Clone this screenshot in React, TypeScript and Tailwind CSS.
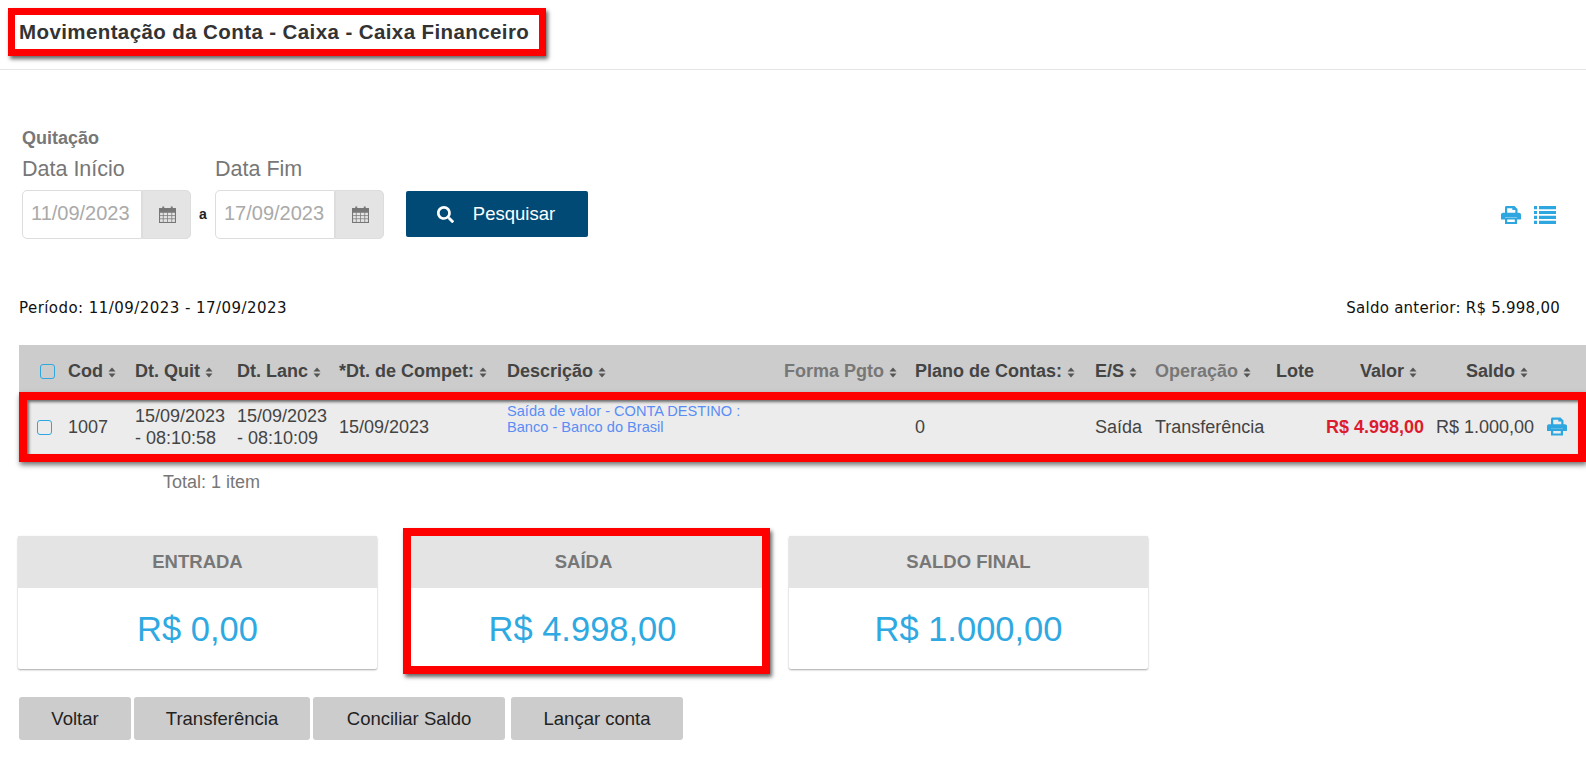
import React from 'react';
import { FaSearch } from 'react-icons/fa';

const COLS = 'grid grid-cols-[49px_67px_102px_102px_168px_277px_131px_180px_60px_121px_50px_110px_111px_39px]';

const SortIcon = () => (
  <svg viewBox="0 0 8 12" className="ml-[5px] inline-block h-[13px] w-[8px] fill-[#555]">
    <path d="M4 1 7.5 5H.5zM4 11 .5 7h7z" />
  </svg>
);

const CalendarIcon = () => (
  <svg viewBox="0 0 16 16" className="h-[17px] w-[17px] fill-none stroke-[#777]">
    <rect x="0.5" y="2.5" width="15" height="13" fill="#e4e4e4" />
    <rect x="0.5" y="2.5" width="15" height="3" fill="#777" />
    <path d="M.5 6h15M.5 9h15M.5 12h15M4 6v9.5M8 6v9.5M12 6v9.5" strokeWidth="0.7" />
    <path d="M4 .5v3M12 .5v3" strokeWidth="1.8" />
  </svg>
);

const PrintIcon = ({ className }: { className: string }) => (
  <svg viewBox="0 0 20 18" className={`fill-current ${className}`}>
    <path d="M4 8V1.5C4 .7 4.7 0 5.5 0h8l3 3v5h-2.2V4h-3V2.2H6.2V8z" />
    <path d="M2 6.8h16c1.1 0 2 .9 2 2V13c0 .3-.2.5-.5.5H16v-2.2H4v2.2H.5A.5.5 0 0 1 0 13V8.8c0-1.1.9-2 2-2z" />
    <path d="M4 11.5h12V18H4zm2.2 2v2.5h7.6v-2.5z" />
  </svg>
);

const ListIcon = ({ className }: { className: string }) => (
  <svg viewBox="0 0 22 18" className={`fill-current ${className}`}>
    <path d="M0 0h3v3.2H0zM5 0h17v3.2H5zM0 4.9h3v3.2H0zM5 4.9h17v3.2H5zM0 9.8h3V13H0zM5 9.8h17V13H5zM0 14.7h3V18H0zM5 14.7h17V18H5z" />
  </svg>
);

const Checkbox = () => (
  <span className="block h-[15px] w-[15px] rounded-[3px] border border-[#2ea7e0]" />
);

const Head = ({ label, muted, sort = true, className = '' }: { label: string; muted?: boolean; sort?: boolean; className?: string }) => (
  <div className={`whitespace-nowrap text-[18px] font-bold ${muted ? 'text-[#777]' : 'text-[#444]'} ${className}`}>
    {label}
    {sort && <SortIcon />}
  </div>
);

const DateField = ({ label, value }: { label: string; value: string }) => (
  <div className="w-[169px]">
    <div className="mb-[9px] text-[21.5px] leading-[24px] text-[#777]">{label}</div>
    <div className="flex h-[49px]">
      <div className="flex w-[120px] items-center rounded-l-[5px] border border-[#ddd] pb-[3px] pl-[8px] text-[20px] text-[#aaa]">
        {value}
      </div>
      <div className="flex w-[49px] items-center justify-center rounded-r-[5px] border border-[#ddd] bg-[#e4e4e4] pl-[2px]">
        <CalendarIcon />
      </div>
    </div>
  </div>
);

const SummaryCard = ({ title, value }: { title: string; value: string }) => (
  <div className="h-[133px] w-[359px] rounded-[2px] bg-white shadow-[0_1px_2px_rgba(0,0,0,0.35)]">
    <div className="flex h-[52px] items-center justify-center bg-[#e4e4e4] text-[18.5px] font-bold text-[#777]">{title}</div>
    <div className="flex h-[81px] items-center justify-center pt-[2px] text-[34.5px] text-[#2fa9e1]">{value}</div>
  </div>
);

const ActionButton = ({ label, className }: { label: string; className: string }) => (
  <button className={`h-[43px] rounded-[3px] bg-[#ccc] text-[18.5px] text-[#222] ${className}`}>{label}</button>
);

export default function App() {
  return (
    <div className="h-[763px] overflow-hidden bg-white font-['Liberation_Sans',sans-serif]">
      {/* Title */}
      <div className="h-[70px] border-b border-[#e5e5e5] pl-[8px] pt-[8px]">
        <div className="flex h-[48px] w-[538px] items-center border-[7px] border-[#f00] pl-[4px] shadow-[2px_3px_4px_rgba(0,0,0,0.6)]">
          <h1 className="whitespace-nowrap text-[20.5px] font-bold tracking-[0.4px] text-[#333]">
            Movimentação da Conta - Caixa - Caixa Financeiro
          </h1>
        </div>
      </div>

      {/* Filter */}
      <div className="pl-[22px] pr-[30px] pt-[57px]">
        <div className="text-[18px] font-bold leading-[22px] text-[#777]">Quitação</div>
        <div className="mt-[8px] flex items-end">
          <DateField label="Data Início" value="11/09/2023" />
          <div className="flex h-[49px] w-[24px] items-center justify-center text-[14px] font-bold text-[#222]">a</div>
          <DateField label="Data Fim" value="17/09/2023" />
          <button className="mb-[2px] ml-[22px] flex h-[46px] w-[182px] items-center justify-center rounded-[2px] bg-[#004a75] text-[18.5px] text-white">
            <FaSearch className="mr-[17px] h-[17px] w-[17px] -translate-x-[2px]" />
            Pesquisar
          </button>
          <div className="mb-[15px] ml-auto flex items-center gap-[13px] text-[#2ea7e0]">
            <PrintIcon className="h-[18px] w-[20px]" />
            <ListIcon className="h-[18px] w-[22px]" />
          </div>
        </div>
      </div>

      {/* Period */}
      <div className="mt-[59px] flex justify-between pl-[19px] pr-[26px] font-['DejaVu_Sans',sans-serif] text-[15px] leading-[20px] text-[#111]">
        <span className="tracking-[0.45px]">Período: 11/09/2023 - 17/09/2023</span>
        <span className="tracking-[0.25px]">Saldo anterior: R$ 5.998,00</span>
      </div>

      {/* Table */}
      <div className="ml-[19px] mt-[27px]">
        <div className={`${COLS} h-[47px] items-center bg-[#ccc] pt-[6px]`}>
          <div className="pl-[21px]"><Checkbox /></div>
          <Head label="Cod" />
          <Head label="Dt. Quit" />
          <Head label="Dt. Lanc" />
          <Head label="*Dt. de Compet:" />
          <Head label="Descrição" />
          <Head label="Forma Pgto" muted />
          <Head label="Plano de Contas:" />
          <Head label="E/S" />
          <Head label="Operação" muted />
          <Head label="Lote" sort={false} />
          <Head label="Valor" className="pl-[34px]" />
          <Head label="Saldo" className="pl-[30px]" />
          <div />
        </div>
        <div className={`${COLS} h-[70px] items-center border-[8px] border-[#f00] bg-[#ececec] text-[18px] leading-[22px] text-[#444] shadow-[1px_3px_5px_rgba(0,0,0,0.55),inset_2px_2px_3px_rgba(0,0,0,0.55)]`}>
          <div className="pl-[10px]"><Checkbox /></div>
          <div className="-ml-[8px]">1007</div>
          <div className="-ml-[8px] whitespace-nowrap">15/09/2023<br />- 08:10:58</div>
          <div className="-ml-[8px] whitespace-nowrap">15/09/2023<br />- 08:10:09</div>
          <div className="-ml-[8px]">15/09/2023</div>
          <div className="-ml-[8px] -mt-[17px] w-[250px] text-[14.6px] leading-[16px] text-[#5a8cf5]">
            Saída de valor - CONTA DESTINO : Banco - Banco do Brasil
          </div>
          <div className="-ml-[8px]" />
          <div className="-ml-[8px]">0</div>
          <div className="-ml-[8px]">Saída</div>
          <div className="-ml-[8px]">Transferência</div>
          <div />
          <div className="-ml-[8px] whitespace-nowrap font-bold text-[#dc1c2e]">R$ 4.998,00</div>
          <div className="-ml-[8px] whitespace-nowrap">R$ 1.000,00</div>
          <div className="-ml-[8px] -mt-[1px]"><PrintIcon className="h-[19px] w-[20px] text-[#2ea7e0]" /></div>
        </div>
      </div>
      <div className="ml-[163px] mt-[9px] text-[18px] leading-[22px] text-[#777]">Total: 1 item</div>

      {/* Totals */}
      <div className="ml-[18px] mt-[43px] flex items-start">
        <SummaryCard title="ENTRADA" value="R$ 0,00" />
        <div className="-mt-[8px] ml-[26px] mr-[19px] h-[146px] w-[367px] border-[8px] border-[#f00] shadow-[2px_3px_4px_rgba(0,0,0,0.6)]">
          <div className="flex h-[52px] items-center justify-center bg-[#e4e4e4] pr-[6px] text-[18.5px] font-bold text-[#777]">SAÍDA</div>
          <div className="flex h-[78px] items-center justify-center pr-[8px] pt-[6px] text-[34.5px] text-[#2fa9e1]">R$ 4.998,00</div>
        </div>
        <SummaryCard title="SALDO FINAL" value="R$ 1.000,00" />
      </div>

      {/* Actions */}
      <div className="ml-[19px] mt-[23px] flex gap-[3px]">
        <ActionButton label="Voltar" className="w-[112px]" />
        <ActionButton label="Transferência" className="w-[176px]" />
        <ActionButton label="Conciliar Saldo" className="w-[192px]" />
        <ActionButton label="Lançar conta" className="ml-[3px] w-[172px]" />
      </div>
    </div>
  );
}
